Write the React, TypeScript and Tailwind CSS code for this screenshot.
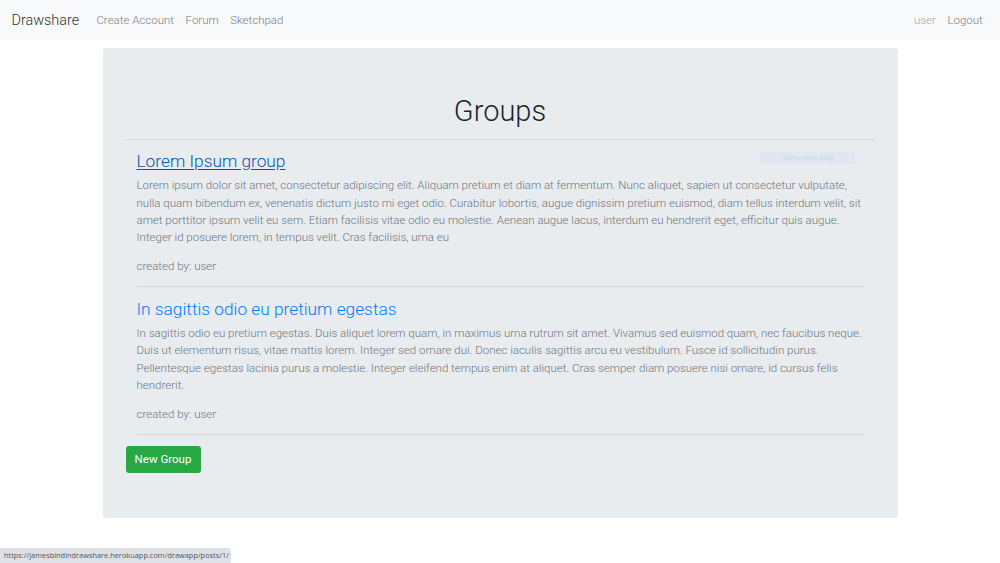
export default function App() {
  const items = [
    {
      title: "Lorem Ipsum group",
      hover: true,
      body:
        "Lorem ipsum dolor sit amet, consectetur adipiscing elit. Aliquam pretium et diam at fermentum. Nunc aliquet, sapien ut consectetur vulputate, nulla quam bibendum ex, venenatis dictum justo mi eget odio. Curabitur lobortis, augue dignissim pretium euismod, diam tellus interdum velit, sit amet porttitor ipsum velit eu sem. Etiam facilisis vitae odio eu molestie. Aenean augue lacus, interdum eu hendrerit eget, efficitur quis augue. Integer id posuere lorem, in tempus velit. Cras facilisis, urna eu",
    },
    {
      title: "In sagittis odio eu pretium egestas",
      hover: false,
      body:
        "In sagittis odio eu pretium egestas. Duis aliquet lorem quam, in maximus urna rutrum sit amet. Vivamus sed euismod quam, nec faucibus neque. Duis ut elementum risus, vitae mattis lorem. Integer sed ornare dui. Donec iaculis sagittis arcu eu vestibulum. Fusce id sollicitudin purus. Pellentesque egestas lacinia purus a molestie. Integer eleifend tempus enim at aliquet. Cras semper diam posuere nisi ornare, id cursus felis hendrerit.",
    },
  ];
  return (
    <div
      className="relative w-[1000px] h-[563px] bg-white overflow-hidden"
      style={{ fontFamily: "Roboto, 'Liberation Sans', sans-serif" }}
    >
      <nav className="h-[40px] bg-[#f8f9fa] flex items-center pt-[1px] px-[11.5px] font-light">
        <span className="text-[14.4px] text-[#333] mr-[11.5px]">Drawshare</span>
        <div className="flex text-[11.5px] text-[#7d7e80]">
          <span className="px-[5.76px]">Create Account</span>
          <span className="px-[5.76px]">Forum</span>
          <span className="px-[5.76px]">Sketchpad</span>
        </div>
        <div className="ml-auto flex text-[11.5px]">
          <span className="px-[5.76px] text-[#a9aaac]">user</span>
          <span className="px-[5.76px] text-[#7d7e80]">Logout</span>
        </div>
      </nav>

      <div className="w-[795px] mx-auto mt-[8px] bg-[#e9ecef] rounded-[3px] px-[23px] pt-[46px] pb-[44.5px] font-light relative">
        <h1 className="text-[29px] leading-[35px] text-center text-[#212529] mb-[9.5px]">Groups</h1>
        <div className="border-t border-[#d5d8db]" />
        <div>
          {items.map((it, i) => (
            <div key={i} className="px-[11px] pt-[11.5px]">
              <h4
                className={
                  "text-[17.3px] leading-[20.7px] mb-[5.6px] " +
                  (it.hover ? "text-[#0056b3] underline underline-offset-[2px]" : "text-[#007bff]")
                }
              >
                {it.title}
              </h4>
              <p className="text-[11.5px] leading-[17.3px] text-[#6c757d] mb-[11.3px]">{it.body}</p>
              <p className="text-[11.5px] leading-[17.3px] text-[#6c757d] mb-[11.3px]">created by: user</p>
              <div className="border-t border-[#d5d8db]" />
            </div>
          ))}
        </div>
        <button className="mt-[11px] h-[27px] w-[75px] bg-[#28a745] text-white text-[11.5px] rounded-[3px] font-normal">
          New Group
        </button>
        <div className="absolute left-[657px] top-[104px] w-[95px] h-[12px] bg-[#e0e7f0] flex items-center justify-center text-[7.5px] text-[#cfd8e4] font-normal">
          Full-screen Snip
        </div>
      </div>

      <div
        className="absolute left-0 bottom-0 h-[15px] w-[231px] bg-[#dee1e6] rounded-tr-[3px] flex items-center pl-[4px] text-[7.4px] text-[#555] whitespace-nowrap"
        style={{ fontFamily: "'Open Sans', 'Noto Sans', sans-serif" }}
      >
        https://jamesbindindrawshare.herokuapp.com/drawapp/posts/1/
      </div>
    </div>
  );
}
